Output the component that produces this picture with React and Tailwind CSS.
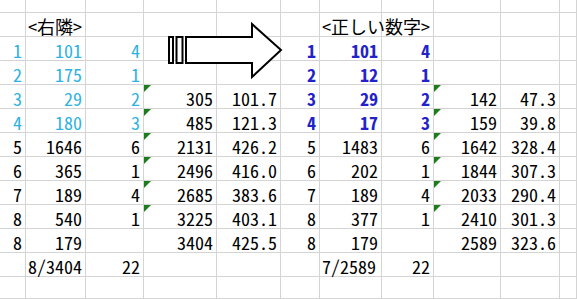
const cyan = "text-[#2fb2e2]";
const blue = "text-[#2222c8] font-bold";

// each row: left block (cols 0-4) and right block (cols 5-9)
const rows = [
  { l: ["1", "101", "4", "", ""], r: ["1", "101", "4", "", ""], color: true },
  { l: ["2", "175", "1", "", ""], r: ["2", "12", "1", "", ""], color: true },
  { l: ["3", "29", "2", "305", "101.7"], r: ["3", "29", "2", "142", "47.3"], color: true, tri: true },
  { l: ["4", "180", "3", "485", "121.3"], r: ["4", "17", "3", "159", "39.8"], color: true, tri: true },
  { l: ["5", "1646", "6", "2131", "426.2"], r: ["5", "1483", "6", "1642", "328.4"], tri: true },
  { l: ["6", "365", "1", "2496", "416.0"], r: ["6", "202", "1", "1844", "307.3"], tri: true },
  { l: ["7", "189", "4", "2685", "383.6"], r: ["7", "189", "4", "2033", "290.4"], tri: true },
  { l: ["8", "540", "1", "3225", "403.1"], r: ["8", "377", "1", "2410", "301.3"], tri: true },
  { l: ["8", "179", "", "3404", "425.5"], r: ["8", "179", "", "2589", "323.6"] },
];

function Cell({ children, className = "", left = false, tri = false }) {
  return (
    <div
      className={`relative flex items-end overflow-visible whitespace-nowrap border-r border-b border-[#d4d4d4] pb-[1px] ${
        left ? "justify-start pl-[2px]" : "justify-end pr-[3px]"
      } ${className}`}
    >
      {tri && (
        <span className="absolute left-0 top-0 w-0 h-0 border-t-[7px] border-r-[7px] border-t-[#1b7d1b] border-r-transparent" />
      )}
      {children}
    </div>
  );
}

function Block({ vals, color, tri, side }) {
  const c = color ? (side === "l" ? cyan : blue) : "text-black";
  return (
    <>
      <Cell className={c}>{vals[0]}</Cell>
      <Cell className={c}>{vals[1]}</Cell>
      <Cell className={c}>{vals[2]}</Cell>
      <Cell tri={tri}>{vals[3]}</Cell>
      <Cell>{vals[4]}</Cell>
    </>
  );
}

export default function App() {
  return (
    <div className="relative w-[577px] h-[299px] overflow-hidden bg-white text-black text-[18px] leading-none font-['Noto_Sans_Mono_CJK_JP','Noto_Sans_CJK_JP',monospace]">
      <div className="grid grid-cols-[26px_60px_58px_73px_64px_39px_62px_52px_67px_59px_1fr] grid-rows-[13px_repeat(11,24px)_22px]">
        {/* top partial row */}
        {Array.from({ length: 11 }).map((_, i) => (
          <Cell key={`t${i}`} />
        ))}

        {/* header row */}
        <Cell />
        <Cell left>&lt;右隣&gt;</Cell>
        <Cell />
        <Cell />
        <Cell />
        <Cell />
        <Cell left className="z-10">&lt;正しい数字&gt;</Cell>
        <Cell />
        <Cell />
        <Cell />
        <Cell />

        {rows.map((row, i) => (
          <div key={i} className="contents">
            <Block vals={row.l} color={row.color} tri={row.tri} side="l" />
            <Block vals={row.r} color={row.color} tri={row.tri} side="r" />
            <Cell />
          </div>
        ))}

        {/* totals row */}
        <Cell />
        <Cell left>8/3404</Cell>
        <Cell>22</Cell>
        <Cell />
        <Cell />
        <Cell />
        <Cell left>7/2589</Cell>
        <Cell>22</Cell>
        <Cell />
        <Cell />
        <Cell />

        {/* bottom partial row */}
        {Array.from({ length: 11 }).map((_, i) => (
          <Cell key={`b${i}`} />
        ))}
      </div>

      {/* block arrow shape floating over the sheet */}
      <svg
        className="absolute left-0 top-0"
        width="577"
        height="299"
        viewBox="0 0 577 299"
      >
        <g fill="#fff" stroke="#000" strokeWidth="2" strokeLinejoin="miter">
          <rect x="169" y="37" width="4" height="26" />
          <rect x="176.5" y="37" width="6" height="26" />
          <path d="M186 37 H252 V24 L281 50 L252 77 V63 H186 Z" />
        </g>
      </svg>
    </div>
  );
}
